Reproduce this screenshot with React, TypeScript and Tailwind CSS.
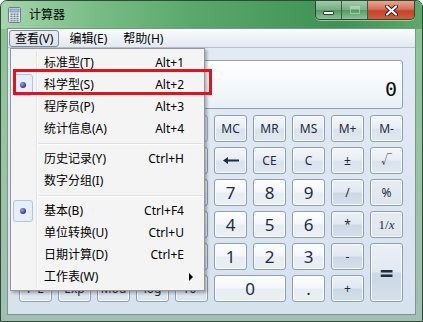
import React from 'react';

type Kind = 'num' | 'fn' | 'op' | 'flat';

const kindCls: Record<Kind, string> = {
  num: "bg-[linear-gradient(180deg,#fcfdfe_0%,#f4f7fa_48%,#e8edf4_52%,#ebf0f6_100%)] text-[17px]",
  fn: "bg-[linear-gradient(180deg,#f2f6fa_0%,#e8eef5_48%,#dae3ee_52%,#dfe7f0_100%)] text-[12px]",
  op: "bg-[linear-gradient(180deg,#eaf0f7_0%,#e1e9f2_48%,#ccd8e6_52%,#d4dfea_100%)] text-[12px]",
  flat: "bg-[linear-gradient(180deg,#e7ecf2_0%,#dee5ed_100%)] text-[12px]",
};

function Key({ children, kind = 'fn', className = '' }: { children?: React.ReactNode; kind?: Kind; className?: string }) {
  return (
    <div
      className={`flex items-center justify-center rounded-[3px] border border-[#8c9fb5] text-[#1d2c3e] shadow-[inset_0_0_0_1px_rgba(255,255,255,0.75)] ${kindCls[kind]} ${className}`}
    >
      {children}
    </div>
  );
}

function BackArrow() {
  return (
    <svg width="16" height="7" viewBox="0 0 16 7">
      <path d="M0 3.5 L5 0 L5 2.5 L16 2.5 L16 4.5 L5 4.5 L5 7 Z" fill="#1d2c3e" />
    </svg>
  );
}

function CalcIcon() {
  const keys = [];
  for (let r = 0; r < 4; r++) {
    for (let c = 0; c < 3; c++) {
      keys.push(<rect key={`${r}-${c}`} x={2.5 + c * 3} y={6.5 + r * 2.2} width="2" height="1.4" fill="#6f7e8f" />);
    }
  }
  return (
    <svg width="13" height="16" viewBox="0 0 13 16">
      <rect x="0.5" y="0.5" width="12" height="15" rx="1.2" fill="#e3e8ee" stroke="#6d7c8c" />
      <rect x="2" y="2" width="9" height="3" fill="#9cc2e6" stroke="#5d7d9e" strokeWidth="0.6" />
      {keys}
    </svg>
  );
}

type Item = { label?: string; shortcut?: string; checked?: boolean; sub?: boolean; sep?: boolean };

const items: Item[] = [
  { label: '标准型(T)', shortcut: 'Alt+1' },
  { label: '科学型(S)', shortcut: 'Alt+2', checked: true },
  { label: '程序员(P)', shortcut: 'Alt+3' },
  { label: '统计信息(A)', shortcut: 'Alt+4' },
  { sep: true },
  { label: '历史记录(Y)', shortcut: 'Ctrl+H' },
  { label: '数字分组(I)' },
  { sep: true },
  { label: '基本(B)', shortcut: 'Ctrl+F4', checked: true },
  { label: '单位转换(U)', shortcut: 'Ctrl+U' },
  { label: '日期计算(D)', shortcut: 'Ctrl+E' },
  { label: '工作表(W)', sub: true },
];

function ViewMenu() {
  return (
    <div className="absolute left-[9px] top-[47px] w-[195px] border border-[#979797] bg-[#f4f4f4] pt-[3px] pb-[2px] text-[12px] text-black shadow-[2px_2px_3px_rgba(0,0,0,0.3)]">
      <div className="absolute left-[25px] top-[2px] bottom-[2px] w-[2px] border-l border-[#e2e3e3] bg-white" />
      {items.map((it, i) =>
        it.sep ? (
          <div key={i} className="relative ml-[28px] mr-[1px] flex h-[8px] flex-col justify-center">
            <div className="h-[2px] border-t border-[#e0e0e0] bg-white" />
          </div>
        ) : (
          <div key={i} className="relative flex h-[22px] items-center pl-[33px] pr-[20px]">
            {it.checked && (
              <div className="absolute left-[2px] top-0 flex h-[22px] w-[20px] items-center justify-center rounded-[3px] border border-[#a9c7ea] bg-[#e6eefa]">
                <div className="h-[6px] w-[6px] rounded-full bg-[radial-gradient(circle_at_35%_35%,#9aa4e8,#2f3590_70%)]" />
              </div>
            )}
            <span className="flex-1 leading-none">{it.label}</span>
            {it.shortcut && <span className="leading-none">{it.shortcut}</span>}
            {it.sub && (
              <svg className="absolute right-[11px] top-[7px]" width="4" height="8" viewBox="0 0 4 8">
                <path d="M0 0 L4 4 L0 8 Z" fill="#000" />
              </svg>
            )}
          </div>
        )
      )}
    </div>
  );
}

export default function App() {
  return (
    <div className="relative flex h-[322px] w-[423px] flex-col overflow-hidden rounded-t-[7px] border border-[#2e4a37] bg-[linear-gradient(180deg,#86c292_0%,#95c4a0_40%,#a3bfb4_100%)] font-['Noto_Sans','Noto_Sans_CJK_SC',sans-serif]">
      {/* title bar */}
      <div className="flex h-[28px] shrink-0 items-start bg-[linear-gradient(90deg,#a6d5ae_0%,#79bd86_22%,#5aa96c_45%,#4a9c5e_65%,#3f9254_80%,#5ba86a_100%)]">
        <div className="flex h-[28px] items-center gap-[8px] pl-[7px]">
          <CalcIcon />
          <span className="text-[12px] leading-none text-black">计算器</span>
        </div>
        <div className="flex-1" />
        <div className="mr-[7px] flex h-[19px] overflow-hidden rounded-b-[5px] border border-t-0 border-[#2f4636] shadow-[0_1px_0_rgba(255,255,255,0.45)]">
          <div className="flex w-[26px] items-center justify-center border-r border-[#3d5a45] bg-[linear-gradient(180deg,rgba(255,255,255,0.5)_0%,rgba(255,255,255,0.25)_50%,rgba(120,170,130,0.25)_51%,rgba(255,255,255,0.4)_100%)]">
            <div className="mt-[5px] h-[4px] w-[11px] rounded-[1px] border border-[#2e3d33] bg-white" />
          </div>
          <div className="flex w-[26px] items-center justify-center border-r border-[#3d5a45] bg-[linear-gradient(180deg,rgba(255,255,255,0.5)_0%,rgba(255,255,255,0.25)_50%,rgba(120,170,130,0.25)_51%,rgba(255,255,255,0.4)_100%)]">
            <div className="h-[8px] w-[10px] border border-t-[3px] border-[#e9f1ea]/70 opacity-60" />
          </div>
          <div className="flex w-[46px] items-center justify-center bg-[linear-gradient(180deg,#e8a592_0%,#d7705b_45%,#c4432a_55%,#d25c3e_100%)]">
            <svg width="13" height="11" viewBox="0 0 13 11">
              <path d="M2 1.5 L11 9.5 M11 1.5 L2 9.5" stroke="#3a1d18" strokeWidth="4" strokeLinecap="round" />
              <path d="M2 1.5 L11 9.5 M11 1.5 L2 9.5" stroke="#ffffff" strokeWidth="2.2" strokeLinecap="round" />
            </svg>
          </div>
        </div>
      </div>

      {/* client */}
      <div className="mx-[7px] mb-[7px] flex flex-1 flex-col bg-[linear-gradient(180deg,#e3ebf5_0%,#d7e2ef_100%)] shadow-[0_0_0_1px_#7c978a]">
        {/* menu bar */}
        <div className="flex h-[19px] shrink-0 items-start gap-[4px] border-b border-[#b6c3d3] bg-[linear-gradient(180deg,#fbfcfe_0%,#eef2f8_50%,#e3e9f2_100%)] pl-[1px] text-[12px] text-black">
          <div className="mt-[1px] flex h-[17px] items-center rounded-[3px] border border-[#7f8b99] bg-[linear-gradient(180deg,#e9edf2,#dde3ea)] px-[5px] leading-none">查看(V)</div>
          <div className="mt-[1px] flex h-[17px] items-center border border-transparent px-[5px] leading-none">编辑(E)</div>
          <div className="mt-[1px] flex h-[17px] items-center border border-transparent px-[5px] leading-none">帮助(H)</div>
        </div>

        <div className="flex flex-col pl-[11px] pr-[12px] pt-[12px]">
          {/* display */}
          <div className="flex h-[49px] flex-col items-end justify-end rounded-[3px] border border-[#8ea1b7] bg-[linear-gradient(180deg,#ffffff_0%,#f6f9fc_50%,#e9f0f8_100%)] pb-[9px] pr-[5px]">
            <span className="font-['DejaVu_Sans_Mono',monospace] text-[20px] leading-none text-[#111]">0</span>
          </div>

          {/* keys; the left block is covered by the open menu */}
          <div className="mt-[6px] grid grid-cols-[repeat(10,33px)] grid-rows-[repeat(6,27px)] gap-x-[6px] gap-y-[5px]">
            <div className="col-span-5 rounded-[3px] border border-[#a4b4c6]" />
            <Key>MC</Key>
            <Key>MR</Key>
            <Key>MS</Key>
            <Key>M+</Key>
            <Key>M-</Key>

            <div />
            <Key />
            <Key />
            <Key />
            <Key />
            <Key><BackArrow /></Key>
            <Key>CE</Key>
            <Key>C</Key>
            <Key>±</Key>
            <Key><span className="text-[11px]">√</span></Key>

            <Key />
            <Key />
            <Key />
            <Key />
            <Key />
            <Key kind="num">7</Key>
            <Key kind="num">8</Key>
            <Key kind="num">9</Key>
            <Key kind="op">/</Key>
            <Key kind="flat">%</Key>

            <Key />
            <Key />
            <Key />
            <Key />
            <Key />
            <Key kind="num">4</Key>
            <Key kind="num">5</Key>
            <Key kind="num">6</Key>
            <Key kind="op">*</Key>
            <Key kind="flat">
              <span className="font-['Liberation_Serif',serif] text-[13px]">1/<i>x</i></span>
            </Key>

            <Key />
            <Key />
            <Key />
            <Key />
            <Key />
            <Key kind="num">1</Key>
            <Key kind="num">2</Key>
            <Key kind="num">3</Key>
            <Key kind="op">-</Key>
            <Key kind="op" className="row-span-2">
              <span className="text-[24px] font-bold leading-none">=</span>
            </Key>

            <Key>F-E</Key>
            <Key>Exp</Key>
            <Key>Mod</Key>
            <Key>log</Key>
            <Key>10ˣ</Key>
            <Key kind="num" className="col-span-2">0</Key>
            <Key kind="num">.</Key>
            <Key kind="op">+</Key>
          </div>
        </div>
      </div>

      <ViewMenu />

      {/* annotation */}
      <div className="absolute left-[12px] top-[68px] h-[26px] w-[199px] border-[3px] border-[#e3131b]" />
    </div>
  );
}
